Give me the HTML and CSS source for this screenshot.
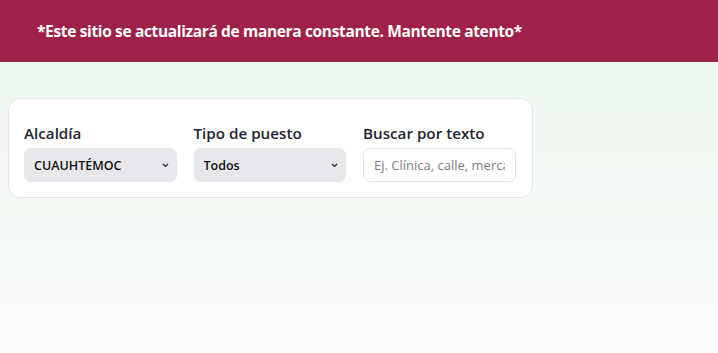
FILE: index.html
```html
<!DOCTYPE html>
<html lang="es">
<head>
    <meta charset="UTF-8">
    <meta name="viewport" content="width=device-width, initial-scale=1.0">
    <title>Puestos</title>
    <link rel="stylesheet" href="styles.css">
</head>
<body>
    <div class="aviso">*Este sitio se actualizará de manera constante. Mantente atento*</div>
    <div class="contenido">
        <div class="filtros">
            <div class="campo">
                <label for="alcaldia">Alcaldía</label>
                <select id="alcaldia" class="selector">
                    <option>CUAUHTÉMOC</option>
                </select>
            </div>
            <div class="campo">
                <label for="tipo">Tipo de puesto</label>
                <select id="tipo" class="selector">
                    <option>Todos</option>
                </select>
            </div>
            <div class="campo">
                <label for="buscar">Buscar por texto</label>
                <input id="buscar" class="buscador" type="text" placeholder="Ej. Clínica, calle, mercado">
            </div>
        </div>
    </div>
</body>
</html>
```
FILE: styles.css
```css
html {
    height: 100%;
}
body {
    margin: 0;
    min-height: 100%;
    font-family: "Open Sans", "Noto Sans", sans-serif;
    background: linear-gradient(to bottom, #ebf6ed 0%, #fbfcfb 100%);
    color: #1f2430;
}
.aviso {
    background-color: #9e2149;
    color: white;
    font-family: "Open Sans", sans-serif;
    font-weight: bold;
    font-size: 15.5px;
    letter-spacing: -0.35px;
    height: 62px;
    box-sizing: border-box;
    padding: 20px 37px 0;
}
.contenido {
    padding: 36px 8px;
}
.filtros {
    width: 525px;
    box-sizing: border-box;
    background: white;
    border: 1px solid #e4e7e6;
    border-radius: 12px;
    padding: 23px 15px 15px;
    display: flex;
    gap: 17px;
}
.campo {
    width: 152.5px;
    display: flex;
    flex-direction: column;
    gap: 4px;
}
.campo label {
    font-size: 15.2px;
    font-weight: 600;
    line-height: 22px;
}
.selector {
    appearance: none;
    height: 34px;
    border: none;
    border-radius: 7px;
    background-color: #e8e7ec;
    font-family: "Open Sans", sans-serif;
    font-size: 12.5px;
    font-weight: 600;
    color: #111;
    padding: 0 24px 0 10px;
    background-image: url("data:image/svg+xml,%3Csvg xmlns='http://www.w3.org/2000/svg' width='7' height='5' viewBox='0 0 7 5'%3E%3Cpath d='M1 1l2.5 2.5 2.5-2.5' fill='none' stroke='%23222' stroke-width='1.2'/%3E%3C/svg%3E");
    background-repeat: no-repeat;
    background-position: right 8px center;
}
.buscador {
    height: 34px;
    box-sizing: border-box;
    border: 1px solid #e2e4e6;
    border-radius: 7px;
    background: white;
    font-family: "Open Sans", sans-serif;
    font-size: 13px;
    padding: 0 10px;
}
.buscador::placeholder {
    color: #7a7d85;
}
```
